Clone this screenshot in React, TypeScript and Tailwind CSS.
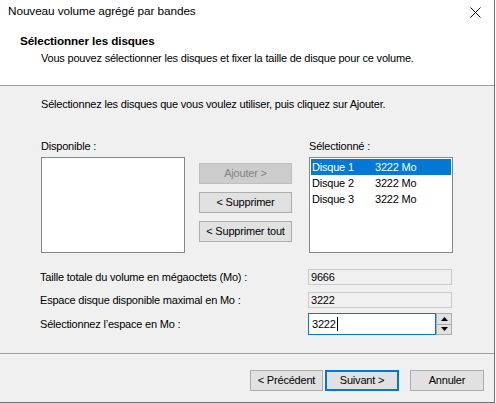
import React from "react";

const font = { fontFamily: '"Liberation Sans", Arial, sans-serif' };

function Btn({ children, w = "w-[93px]", disabled = false, primary = false }: { children: React.ReactNode; w?: string; disabled?: boolean; primary?: boolean }) {
  const base = "h-[21px] flex items-center justify-center text-[11px] tracking-[-0.2px] leading-none";
  if (disabled)
    return <div className={`${base} ${w} bg-[#cccccc] border border-[#bfbfbf] text-[#838383]`}>{children}</div>;
  if (primary)
    return <div className={`${base} ${w} bg-[#e1e1e1] border-2 border-[#0078d7] text-black`}>{children}</div>;
  return <div className={`${base} ${w} bg-[#e1e1e1] border border-[#adadad] text-black`}>{children}</div>;
}

export default function App() {
  return (
    <div className="w-[496px] h-[403px] bg-white" style={font}>
      <div className="w-[495px] h-[403px] border-r border-b border-[#707070] flex flex-col text-[11px] tracking-[-0.2px] text-black">
        {/* title bar */}
        <div className="h-[24px] flex items-center justify-between pl-[8px] pr-[12px] bg-white">
          <span className="text-[11.8px] tracking-[-0.1px]">Nouveau volume agrégé par bandes</span>
          <svg width="11" height="11" viewBox="0 0 11 11" className="mr-[1px]">
            <path d="M0.5 0.5 L10.5 10.5 M10.5 0.5 L0.5 10.5" stroke="#111" strokeWidth="1" />
          </svg>
        </div>
        {/* header */}
        <div className="h-[61px] bg-white pl-[20px] pt-[9px]">
          <div className="font-bold text-[11.7px] tracking-[-0.1px] leading-[16px]">Sélectionner les disques</div>
          <div className="pl-[21px] leading-[16px] mt-[1px]">Vous pouvez sélectionner les disques et fixer la taille de disque pour ce volume.</div>
        </div>
        <div className="h-px bg-[#a0a0a0]" />
        {/* body */}
        <div className="flex-1 bg-[#f0f0f0] flex flex-col">
          <div className="pl-[41px] pt-[10px] leading-[16px]">Sélectionnez les disques que vous voulez utiliser, puis cliquez sur Ajouter.</div>
          <div className="flex pl-[41px] mt-[26px]">
            <div className="flex flex-col">
              <div className="leading-[16px] h-[19px]">Disponible :</div>
              <div className="w-[144px] h-[96px] bg-white border border-[#828790]" />
            </div>
            <div className="flex flex-col gap-[8px] ml-[14px] pt-[25px]">
              <Btn disabled>Ajouter &gt;</Btn>
              <Btn>&lt; Supprimer</Btn>
              <Btn>&lt; Supprimer tout</Btn>
            </div>
            <div className="flex flex-col ml-[17px]">
              <div className="leading-[16px] h-[19px]">Sélectionné :</div>
              <div className="w-[144px] h-[96px] bg-white border border-[#828790] p-[1px]">
                {[1, 2, 3].map((n) => (
                  <div key={n} className={`h-[16px] flex items-center pl-[1px] ${n === 1 ? "bg-[#0078d7] text-white" : ""}`}>
                    <span className="w-[63px]">Disque {n}</span>
                    <span>3222 Mo</span>
                  </div>
                ))}
              </div>
            </div>
          </div>
          <div className="flex flex-col pl-[40px] mt-[16px]">
            <div className="flex items-center h-[16px]">
              <span className="w-[268px]">Taille totale du volume en mégaoctets (Mo) :</span>
              <div className="w-[144px] h-[16px] bg-[#f0f0f0] border border-[#c8c8c8] flex items-center pl-[2px]">9666</div>
            </div>
            <div className="flex items-center h-[16px] mt-[7px]">
              <span className="w-[268px]">Espace disque disponible maximal en Mo :</span>
              <div className="w-[144px] h-[16px] bg-[#f0f0f0] border border-[#c8c8c8] flex items-center pl-[2px]">3222</div>
            </div>
            <div className="flex items-center h-[22px] mt-[5px]">
              <span className="w-[268px]">Sélectionnez l’espace en Mo :</span>
              <div className="flex h-[22px]">
                <div className="w-[128px] h-[22px] bg-white border border-[#0078d7] flex items-center pl-[3px]">
                  3222<span className="inline-block w-px h-[14px] bg-black ml-[1px]" />
                </div>
                <div className="w-[16px] h-[22px] flex flex-col bg-[#f0f0f0]">
                  <div className="flex-1 border border-[#adadad] bg-[#e1e1e1] flex items-center justify-center">
                    <svg width="7" height="4" viewBox="0 0 7 4"><path d="M3.5 0 L7 4 L0 4 Z" fill="#000" /></svg>
                  </div>
                  <div className="flex-1 border border-t-0 border-[#adadad] bg-[#e1e1e1] flex items-center justify-center">
                    <svg width="7" height="4" viewBox="0 0 7 4"><path d="M0 0 L7 0 L3.5 4 Z" fill="#000" /></svg>
                  </div>
                </div>
              </div>
            </div>
          </div>
          <div className="h-px bg-[#a0a0a0] mt-[18px]" />
          <div className="flex justify-end pr-[10px] pt-[16px]">
            <Btn w="w-[73px]">&lt; Précédent</Btn>
            <div className="ml-[2px]"><Btn w="w-[74px]" primary>Suivant &gt;</Btn></div>
            <div className="ml-[11px]"><Btn w="w-[74px]">Annuler</Btn></div>
          </div>
        </div>
      </div>
    </div>
  );
}
